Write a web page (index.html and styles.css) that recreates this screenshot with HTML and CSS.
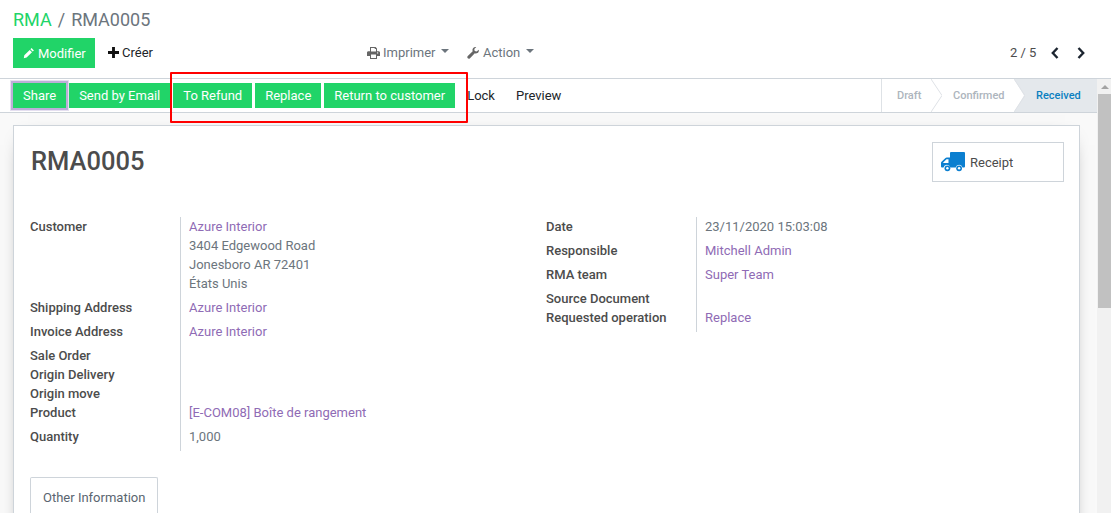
FILE: index.html
```html
<!DOCTYPE html>
<html lang="fr">
<head>
<meta charset="utf-8">
<title>RMA0005</title>
<link rel="stylesheet" href="styles.css">
</head>
<body>
<header class="panel">
  <div class="crumbs"><a class="crumb-link">RMA</a><span class="crumb-sep">/</span><span class="crumb-cur">RMA0005</span></div>
  <div class="panel-row">
    <div class="panel-left">
      <button class="btn btn-main"><svg class="ico ico-pencil" viewBox="0 0 12 12"><path d="M8.6 1.1l2.3 2.3-1.2 1.2-2.3-2.3zM6.7 2.9L9 5.2 3.6 10.6 0.8 11.2 1.3 8.3z" fill="#fff"/></svg>Modifier</button>
      <button class="btn btn-plain"><svg class="ico ico-plus" viewBox="0 0 10 10"><path d="M3.7 0h2.6v3.7H10v2.6H6.3V10H3.7V6.3H0V3.7h3.7z" fill="#111"/></svg>Créer</button>
    </div>
    <div class="panel-mid">
      <span class="menu menu-print"><svg class="ico ico-print" viewBox="0 0 13 12"><path d="M3 0h5.6L10 1.4V4.2h1.6c.8 0 1.4.6 1.4 1.3v3.6h-3V12H3V9.1H0V5.5c0-.7.6-1.3 1.4-1.3H3zM4 1v3.6h5V2H7.7V1zM4 7.6V11h5V7.6zM10.6 5.2a.7.7 0 1 0 0 1.4.7.7 0 0 0 0-1.4z" fill="#666" fill-rule="evenodd"/></svg>Imprimer<i class="caret"></i></span>
      <span class="menu"><svg class="ico ico-wrench" viewBox="0 0 12 12"><path d="M11.8 2.7c.3 1.4-.2 2.8-1.4 3.4-.9.5-1.8.5-2.6.2L3 11.2c-.7.7-1.6.7-2.2.1-.7-.7-.6-1.6 0-2.2l4.9-4.8C5.300 3.300 5.400 2.300 5.900 1.500 6.600.400 8 -.2 9.300.1L7.300 2.100l.4 1.900 1.900.5z" fill="#666"/></svg>Action<i class="caret caret-action"></i></span>
    </div>
    <div class="panel-right">
      <span class="pager">2 / 5</span>
      <svg class="chev" viewBox="0 0 10 12"><path d="M7.500 1L2.800 6l4.700 5" fill="none" stroke="#1c2530" stroke-width="2.400"/></svg>
      <svg class="chev chev-next" viewBox="0 0 10 12"><path d="M2.500 1l4.700 5-4.700 5" fill="none" stroke="#1c2530" stroke-width="2.400"/></svg>
    </div>
  </div>
</header>

<div class="workspace">
  <main class="main">
    <div class="statusbar">
      <div class="actions">
        <button class="act act-focus">Share</button>
        <button class="act">Send by Email</button>
        <button class="act">To Refund</button>
        <button class="act">Replace</button>
        <button class="act">Return to customer</button>
        <button class="act-link act-lock">Lock</button>
        <button class="act-link">Preview</button>
      </div>
      <div class="stages">
        <div class="stage stage-draft">Draft<svg class="stage-chev" viewBox="0 0 11 33"><path d="M0 0l11 16.500L0 33" fill="none" stroke="#dee2e6"/></svg></div>
        <div class="stage stage-conf">Confirmed<svg class="stage-chev" viewBox="0 0 11 33"><path d="M0 0l11 16.500L0 33" fill="none" stroke="#dee2e6"/></svg></div>
        <div class="stage stage-cur">Received</div>
      </div>
    </div>
    <div class="sheet-area">
      <section class="sheet">
        <div class="stat-row">
          <button class="stat"><svg class="ico-truck" viewBox="0 0 24 20"><path d="M10 0h13a1 1 0 0 1 1 1v13.500a1 1 0 0 1-1 1h-1.500a3.500 3.500 0 0 0-6.800 0h-5.400a3.500 3.500 0 0 0-6.800 0H1a1 1 0 0 1-1-1V11c0-.5.200-.9.500-1.200L4.500 6c.3-.3.700-.5 1.200-.5H9V1a1 1 0 0 1 1-1zM5.500 7.200L2.200 10.500V11H7.500V7.200z" fill="#0b7fd0" fill-rule="evenodd"/><circle cx="6.400" cy="16.300" r="2.900" fill="#0b7fd0"/><circle cx="18.100" cy="16.300" r="2.900" fill="#0b7fd0"/><circle cx="6.400" cy="16.300" r="1.200" fill="#fff"/><circle cx="18.100" cy="16.300" r="1.200" fill="#fff"/></svg>Receipt</button>
        </div>
        <h1 class="title">RMA0005</h1>
        <div class="groups">
          <table class="fields fields-left">
            <tr><th>Customer</th><td class="pad"><a>Azure Interior</a><br>3404 Edgewood Road<br>Jonesboro AR 72401<br>États Unis</td></tr>
            <tr><th>Shipping Address</th><td class="pad"><a>Azure Interior</a></td></tr>
            <tr><th>Invoice Address</th><td class="pad"><a>Azure Interior</a></td></tr>
            <tr><th>Sale Order</th><td></td></tr>
            <tr><th>Origin Delivery</th><td></td></tr>
            <tr><th>Origin move</th><td></td></tr>
            <tr><th>Product</th><td class="pad"><a>[E-COM08] Boîte de rangement</a></td></tr>
            <tr><th>Quantity</th><td class="pad">1,000</td></tr>
          </table>
          <table class="fields fields-right">
            <tr><th>Date</th><td class="pad">23/11/2020 15:03:08</td></tr>
            <tr><th>Responsible</th><td class="pad"><a>Mitchell Admin</a></td></tr>
            <tr><th>RMA team</th><td class="pad"><a>Super Team</a></td></tr>
            <tr><th>Source Document</th><td></td></tr>
            <tr><th>Requested operation</th><td class="pad"><a>Replace</a></td></tr>
          </table>
        </div>
        <div class="tabs"><span class="tab">Other Information</span></div>
      </section>
    </div>
  </main>
  <div class="scrollbar"><i class="scroll-up"></i><div class="scroll-thumb"></div></div>
</div>
<div class="callout"></div>
</body>
</html>
```
FILE: styles.css
```css
* { box-sizing: border-box; }
html, body { margin: 0; height: 513px; overflow: hidden; }
body { font: 13px/19px Roboto, "Liberation Sans", sans-serif; color: #4c4c4c; background: #fff; position: relative; display: flex; flex-direction: column; }
button { font: inherit; border: 0; background: none; padding: 0; margin: 0; }

.panel { height: 79px; flex: none; border-bottom: 1px solid #ced4da; padding: 8px 13px 0; }
.crumbs { font-size: 18px; line-height: 24px; height: 30px; }
.crumb-link { color: #21d468; }
.crumb-sep { color: #6c757d; margin: 0 6px; }
.crumb-cur { color: #6c757d; }
.panel-row { display: flex; align-items: flex-start; }
.panel-left { width: 354px; display: flex; align-items: flex-start; }
.btn { height: 30px; display: inline-flex; align-items: center; }
.btn-main { width: 82px; background: #21d468; color: #fff; padding-left: 10px; }
.btn-plain { color: #212529; padding-left: 13px; height: 29px; }
.ico { display: block; flex: none; }
.ico-pencil { width: 12px; height: 12px; margin-right: 3px; }
.ico-plus { width: 11px; height: 11px; margin-right: 3px; }
.panel-mid { width: 643px; display: flex; color: #6c757d; padding-top: 5px; }
.menu { display: inline-flex; align-items: center; height: 19px; }
.menu-print { width: 100px; }
.ico-print { width: 13px; height: 12px; margin-right: 3px; }
.ico-wrench { width: 12px; height: 12px; margin-right: 4px; }
.caret { width: 0; height: 0; border-left: 4px solid transparent; border-right: 4px solid transparent; border-top: 4px solid #6c757d; margin: -3px 0 0 5px; }
.caret-action { margin-left: 6px; }
.panel-right { flex: 1; display: flex; align-items: center; padding-top: 5px; height: 24px; color: #4c4c4c; }
.pager { font-size: 13px; width: 39px; }
.chev { width: 10px; height: 12px; margin-left: 1px; }
.chev-next { margin-left: 16px; }

.workspace { flex: 1; display: flex; min-height: 0; }
.main { flex: 1; min-width: 0; display: flex; flex-direction: column; }
.statusbar { height: 34px; flex: none; display: flex; justify-content: space-between; border-bottom: 1px solid #ced4da; }
.actions { display: flex; align-items: flex-start; padding: 4px 0 0 13px; gap: 3px; }
.act { height: 25px; background: #21d468; color: #fff; padding: 0 10px; }
.act-focus { box-shadow: 0 0 0 2px #bcaed8, 0 0 0 3px #e5dff0; }
.act-link { height: 25px; color: #212529; }
.act-lock { margin-left: 9px; }
.act-link + .act-link { margin-left: 18px; }
.stages { display: flex; border-left: 1px solid #dee2e6; font-size: 11px; font-weight: 500; height: 33px; }
.stage { position: relative; display: flex; align-items: center; height: 33px; color: #adb5bd; }
.stage-draft { width: 49px; padding-left: 15px; }
.stage-conf { width: 83px; padding-left: 22px; }
.stage-cur { width: 83px; padding-left: 22px; color: #0b7fc0; background: #e4e8ec; clip-path: polygon(0 0, 100% 0, 100% 100%, 0 100%, 10px 50%); }
.stage-chev { position: absolute; left: 100%; top: 0; width: 11px; height: 33px; z-index: 1; }

.sheet-area { flex: 1; min-height: 0; background: #f9f9f9; padding: 12px 17px 0 13px; overflow: hidden; }
.sheet { background: #fff; border: 1px solid #ced4da; border-bottom: 0; height: 420px; padding: 16px 15px 0 16px; box-shadow: 0 5px 20px -15px #000; }
.stat-row { float: right; }
.stat { width: 132px; height: 40px; border: 1px solid #ced4da; display: flex; align-items: center; padding-left: 8px; color: #4c4c4c; }
.ico-truck { width: 24px; height: 20px; margin-right: 5px; }
.title { margin: 0; padding-left: 1px; font-size: 25.5px; line-height: 38px; font-weight: 500; color: #4c4c4c; }
.groups { display: flex; margin-top: 37px; align-items: flex-start; }
.fields { border-collapse: collapse; border-spacing: 0; }
.fields-left { width: 516px; }
.fields th { width: 150px; padding: 0; text-align: left; vertical-align: top; font-weight: 500; color: #4c4c4c; }
.fields td { padding: 0 0 0 8.5px; vertical-align: top; border-left: 1px solid #ced4da; color: #6c757d; }
.fields td.pad { padding-bottom: 5px; }
.fields a { color: #8f6bb5; }
.tabs { margin-top: 26px; }
.tab { display: inline-block; height: 40px; padding: 10px 12px; border: 1px solid #ced4da; border-bottom: 0; border-radius: 2px 2px 0 0; color: #5a6570; }

.scrollbar { width: 14px; flex: none; background: #f1f1f1; padding: 0 0 0 1px; position: relative; }
.scroll-up { display: block; width: 0; height: 0; margin: 6px auto 0; border-left: 4px solid transparent; border-right: 4px solid transparent; border-bottom: 4px solid #a3a3a3; }
.scroll-thumb { height: 214px; margin-top: 5px; background: #c1c1c1; }
.callout { position: absolute; left: 170px; top: 72px; width: 298px; height: 51px; border: 2px solid #f00; border-radius: 1px; }
```
